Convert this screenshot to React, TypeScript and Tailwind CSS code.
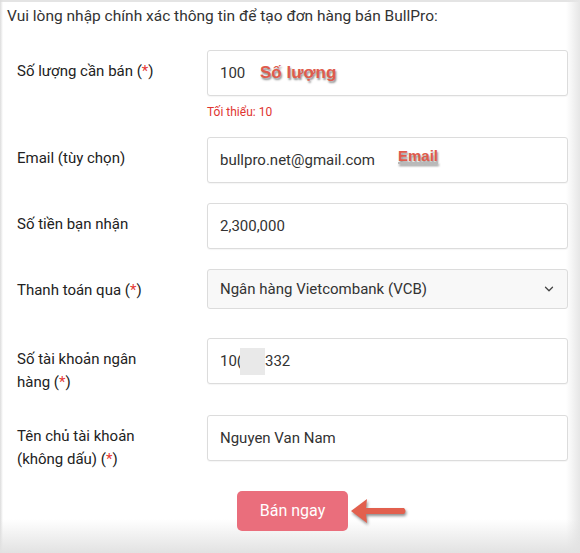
import { ChevronDown } from 'lucide-react';

const font = { fontFamily: 'Roboto, "Noto Sans", sans-serif' };

function Req() {
  return <span className="text-[#e53935]">*</span>;
}

function Row({
  label,
  children,
  className = '',
}: {
  label: React.ReactNode;
  children: React.ReactNode;
  className?: string;
}) {
  return (
    <div className={`flex items-start ${className}`}>
      <div className="w-[190px] shrink-0 pr-[42px] pt-[10px] text-[15px] leading-[23px] text-[#222]">{label}</div>
      <div className="relative w-[361px]">{children}</div>
    </div>
  );
}

function Field({ value, children }: { value: React.ReactNode; children?: React.ReactNode }) {
  return (
    <div className="relative flex h-[46px] items-center rounded-[3px] border border-[#dcdcdc] bg-white px-[12px] text-[15px] text-[#333] shadow-[0_1px_1px_rgba(0,0,0,0.04)]">
      {value}
      {children}
    </div>
  );
}

const note =
  'absolute font-bold text-[#df5b4c] [font-family:"Liberation_Sans",Arial,sans-serif] [text-shadow:1px_2px_2px_rgba(0,0,0,0.45)]';

export default function App() {
  return (
    <div style={font} className="relative h-[553px] w-[580px] overflow-hidden bg-white">
      <div className="pointer-events-none absolute inset-x-0 top-0 h-[2px] bg-[#e4e4e4]" />
      <div className="pointer-events-none absolute inset-y-0 left-0 w-[3px] bg-gradient-to-r from-[#dcdcdc] to-transparent" />
      <div className="pointer-events-none absolute inset-y-0 right-0 w-[14px] bg-gradient-to-l from-[#e6e6e6] to-transparent" />
      <div className="pointer-events-none absolute inset-x-0 bottom-0 h-[34px] bg-gradient-to-t from-[#e2e2e2] to-transparent" />

      <div className="relative pl-[7px] pt-[6px]">
        <p className="text-[15.5px] leading-[20px] text-[#333]">
          Vui lòng nhập chính xác thông tin để tạo đơn hàng bán BullPro:
        </p>

        <div className="mt-[24px] flex flex-col pl-[10px]">
          <Row
            label={
              <>
                Số lượng cần bán (<Req />)
              </>
            }
          >
            <Field value="100">
              <span className={`${note} left-[52px] top-[9px] text-[17px]`}>Số lượng</span>
            </Field>
            <div className="mt-[8px] text-[12px] leading-[16px] text-[#e0342f]">Tối thiểu: 10</div>
          </Row>

          <Row label="Email (tùy chọn)" className="mt-[17px]">
            <Field value="bullpro.net@gmail.com">
              <span className={`${note} left-[190px] top-[9px] text-[15px] leading-[18px] underline decoration-[#b9b9b9] decoration-2 underline-offset-[1px]`}>
                Email
              </span>
            </Field>
          </Row>

          <Row label="Số tiền bạn nhận" className="mt-[20px]">
            <Field value="2,300,000" />
          </Row>

          <Row
            label={
              <>
                Thanh toán qua (<Req />)
              </>
            }
            className="mt-[20px]"
          >
            <div className="flex h-[40px] items-center justify-between rounded-[3px] border border-[#dcdcdc] bg-[#f8f8f8] pl-[12px] pr-[11px] text-[15px] text-[#333]">
              <span>Ngân hàng Vietcombank (VCB)</span>
              <ChevronDown className="h-[14px] w-[14px] text-[#444]" strokeWidth={2.2} />
            </div>
          </Row>

          <Row
            label={
              <>
                Số tài khoản ngân hàng (<Req />)
              </>
            }
            className="mt-[29px]"
          >
            <Field
              value={
                <span className="flex items-center">
                  10(
                  <span className="-ml-[2px] h-[27px] w-[25px] bg-[#e9e9e9]" />
                  332
                </span>
              }
            />
          </Row>

          <Row
            label={
              <>
                Tên chủ tài khoản (không dấu) (<Req />)
              </>
            }
            className="mt-[21px]"
          >
            <Field value="Nguyen Van Nam" />
          </Row>
        </div>

        <div className="relative mt-[20px] flex justify-center pr-[2px]">
          <button className="h-[40px] w-[111px] rounded-[5px] bg-[#ea6e7c] text-[16px] text-white">Bán ngay</button>
          <svg
            className="absolute left-[341px] top-[4px] drop-shadow-[1px_2px_1.5px_rgba(0,0,0,0.45)]"
            width="62"
            height="32"
            viewBox="0 0 62 32"
          >
            <path d="M3 16 L19 4 L18 13 L56 13 Q59 16 56 19 L18 19 L19 28 Z" fill="#e2604e" />
          </svg>
        </div>
      </div>
    </div>
  );
}
